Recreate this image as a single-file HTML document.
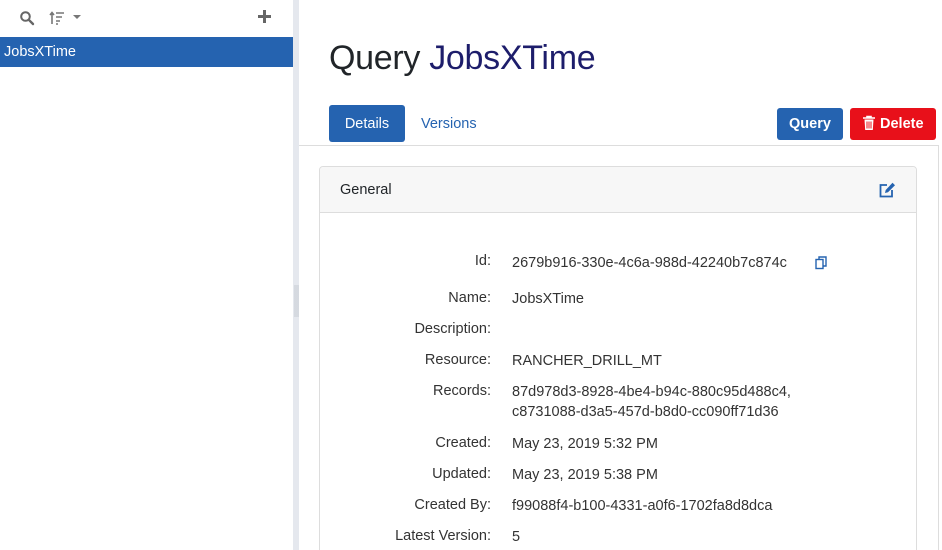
<!DOCTYPE html><html><head><style>
*{box-sizing:border-box;margin:0;padding:0}
html,body{width:942px;height:550px;overflow:hidden}
body{font-family:"Liberation Sans",sans-serif;background:#fff;position:relative;color:#212529}
.abs{position:absolute}
.lbl{position:absolute;right:451px;font-size:14.5px;color:#333;text-align:right}
.val{position:absolute;left:512px;font-size:14.5px;color:#333;line-height:20px}
</style></head><body>
<svg class="abs" style="left:19px;top:10px" width="16" height="16" viewBox="0 0 16 16"><circle cx="6.5" cy="6.5" r="4.3" fill="none" stroke="#666" stroke-width="2"/><path d="M9.8 9.8L14 14" stroke="#666" stroke-width="2.4" stroke-linecap="round"/></svg>
<svg class="abs" style="left:49px;top:10px" width="16" height="16" viewBox="0 0 16 16"><path d="M3 14V3M1 5l2-2.5L5 5" stroke="#777" stroke-width="1.6" fill="none"/><path d="M7 3h8M7 7h6M7 11h4M7 14h2" stroke="#777" stroke-width="1.6"/></svg>
<div class="abs" style="left:73px;top:15px;border-left:4px solid transparent;border-right:4px solid transparent;border-top:4px solid #777"></div>
<div class="abs" style="left:258px;top:15px;width:13px;height:2.5px;background:#666"></div>
<div class="abs" style="left:263px;top:10px;width:2.5px;height:13px;background:#666"></div>
<div class="abs" style="left:0;top:37px;width:293px;height:30px;background:#2563b0;color:#fff;font-size:14.5px;padding:7px 0 0 4px">JobsXTime</div>
<div class="abs" style="left:293px;top:0;width:6px;height:550px;background:#e5e8ee"></div>
<div class="abs" style="left:294px;top:285px;width:5px;height:32px;background-image:radial-gradient(#c8ccd4 0.7px,transparent 0.9px);background-size:2px 2px"></div>
<div class="abs" style="left:329px;top:39px;font-size:34px;letter-spacing:-0.3px">Query <span style="color:#1d1d6b">JobsXTime</span></div>
<div class="abs" style="left:329px;top:105px;width:76px;height:37px;background:#2563b0;border-radius:3px;color:#fff;font-size:14.5px;text-align:center;line-height:39px">Details</div>
<div class="abs" style="left:421px;top:116px;font-size:14.5px;color:#2563b0">Versions</div>
<div class="abs" style="left:777px;top:108px;width:66px;height:32px;background:#2563b0;border-radius:3px;color:#fff;font-size:14.5px;font-weight:bold;text-align:center;line-height:32px">Query</div>
<div class="abs" style="left:850px;top:108px;width:86px;height:32px;background:#e8101a;border-radius:3px;color:#fff;font-size:14.5px;font-weight:bold;line-height:32px;padding-left:30px">Delete</div>
<svg class="abs" style="left:862px;top:115px" width="14" height="16" viewBox="0 0 14 16"><path d="M1 3h12M5 3V1.5h4V3" stroke="#fff" stroke-width="1.6" fill="none"/><path d="M2.5 4.5h9l-.7 10.5h-7.6z" fill="#fff"/><path d="M5 6.5v7M7 6.5v7M9 6.5v7" stroke="#e8101a" stroke-width="1"/></svg>
<div class="abs" style="left:299px;top:145px;width:640px;height:1px;background:#ddd"></div>
<div class="abs" style="left:938px;top:146px;width:1px;height:404px;background:#ddd"></div>
<div class="abs" style="left:319px;top:166px;width:598px;height:400px;border:1px solid #ddd;border-radius:4px"></div>
<div class="abs" style="left:320px;top:167px;width:596px;height:46px;background:#f7f7f7;border-bottom:1px solid #ddd;border-radius:4px 4px 0 0;font-size:14.5px;padding:15px 0 0 20px">General</div>
<svg class="abs" style="left:879px;top:182px" width="17" height="16" viewBox="0 0 17 16"><path d="M8 3H1.5v11.5H13V8" stroke="#2563b0" stroke-width="1.8" fill="none"/><path d="M13.5 0.8l2.5 2.5L9 10.3 6 11l.7-3z" fill="#2563b0"/></svg>
<div class="lbl" style="top:253px">Id:</div><div class="val" style="top:253px">2679b916-330e-4c6a-988d-42240b7c874c</div>
<svg class="abs" style="left:815px;top:256px" width="13" height="14" viewBox="0 0 13 14"><rect x="1" y="3.5" width="7" height="9" fill="none" stroke="#2563b0" stroke-width="1.4"/><path d="M4 3V1h7v9H8.5" fill="none" stroke="#2563b0" stroke-width="1.4"/></svg>
<div class="lbl" style="top:290px">Name:</div><div class="val" style="top:289px">JobsXTime</div>
<div class="lbl" style="top:321px">Description:</div>
<div class="lbl" style="top:352px">Resource:</div><div class="val" style="top:351px">RANCHER_DRILL_MT</div>
<div class="lbl" style="top:383px">Records:</div><div class="val" style="top:382px">87d978d3-8928-4be4-b94c-880c95d488c4,<br>c8731088-d3a5-457d-b8d0-cc090ff71d36</div>
<div class="lbl" style="top:435px">Created:</div><div class="val" style="top:434px">May 23, 2019 5:32 PM</div>
<div class="lbl" style="top:466px">Updated:</div><div class="val" style="top:465px">May 23, 2019 5:38 PM</div>
<div class="lbl" style="top:497px">Created By:</div><div class="val" style="top:496px">f99088f4-b100-4331-a0f6-1702fa8d8dca</div>
<div class="lbl" style="top:528px">Latest Version:</div><div class="val" style="top:527px">5</div>
</body></html>
